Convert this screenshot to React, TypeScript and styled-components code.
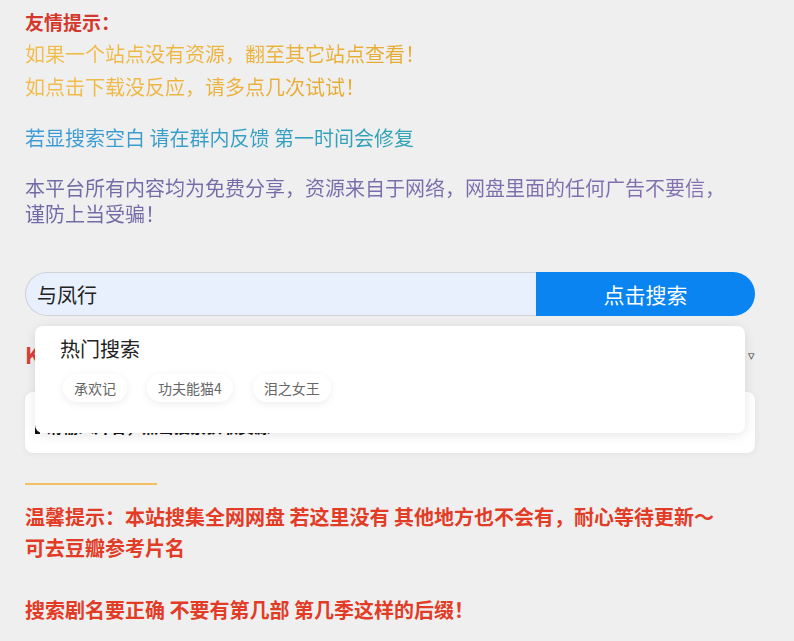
import styled, { createGlobalStyle } from "styled-components";

const GlobalStyle = createGlobalStyle`
  body {
    margin: 0;
    background: #efefef;
    font-family: "Noto Sans CJK SC", "Noto Sans", sans-serif;
  }
`;

const Page = styled.div`
  width: 730px;
  padding: 7px 39px 20px 25px;
`;

const Title = styled.div`
  font-size: 19px;
  font-weight: 700;
  line-height: 30px;
  color: #d4372c;
`;

const GradientText = styled.div<{ $from: string; $to: string; $lh: number }>`
  font-size: 20px;
  line-height: ${({ $lh }) => $lh}px;
  background: linear-gradient(90deg, ${({ $from }) => $from}, ${({ $to }) => $to});
  -webkit-background-clip: text;
  background-clip: text;
  color: transparent;
  width: fit-content;
  max-width: 715px;
`;

const Spaced = styled.div<{ $top: number }>`
  margin-top: ${({ $top }) => $top}px;
`;

const SearchWrap = styled.div`
  position: relative;
  margin-top: 45px;
`;

const SearchBar = styled.form`
  display: flex;
  height: 44px;
`;

const SearchInput = styled.input`
  flex: 1;
  min-width: 0;
  box-sizing: border-box;
  height: 44px;
  padding: 0 11px;
  border: 1px solid #cfd3d8;
  border-right: none;
  border-radius: 22px 0 0 22px;
  background: #e8f0fe;
  font-family: inherit;
  font-size: 20px;
  color: #222;
  caret-color: #222;
  outline: none;
`;

const SearchButton = styled.button`
  width: 219px;
  height: 44px;
  border: none;
  border-radius: 0 22px 22px 0;
  background: #0a84f0;
  color: #fff;
  font-family: inherit;
  font-size: 21px;
  cursor: pointer;
`;

const Dropdown = styled.div`
  position: absolute;
  top: 54px;
  left: 10px;
  right: 10px;
  height: 107px;
  box-sizing: border-box;
  padding: 9px 25px 0;
  background: #fff;
  border-radius: 8px;
  box-shadow: 0 2px 12px rgba(0, 0, 0, 0.1);
  z-index: 2;
`;

const DropTitle = styled.div`
  font-size: 20px;
  line-height: 28px;
  color: #222;
`;

const Chips = styled.div`
  display: flex;
  gap: 20px;
  margin: 11px 0 0 3px;
`;

const Chip = styled.span`
  height: 28px;
  line-height: 28px;
  padding: 0 11px;
  border-radius: 14px;
  background: #fff;
  box-shadow: 0 2px 8px rgba(0, 0, 0, 0.07);
  font-size: 14px;
  color: #666;
`;

const HeadRow = styled.div`
  display: flex;
  justify-content: space-between;
  align-items: center;
  height: 30px;
  margin-top: 23px;
`;

const Brand = styled.div`
  font-size: 22px;
  font-weight: 700;
  color: #d8403a;
`;

const Select = styled.div`
  font-size: 13px;
  color: #333;
`;

const Card = styled.div`
  margin-top: 23px;
  height: 61px;
  box-sizing: border-box;
  padding: 23px 10px 0;
  background: #fff;
  border-radius: 8px;
  box-shadow: 0 1px 6px rgba(0, 0, 0, 0.06);
`;

const CardText = styled.div`
  display: flex;
  align-items: center;
  gap: 6px;
  font-size: 16px;
  font-weight: 700;
  line-height: 22px;
  color: #111;
`;

const Mark = styled.span`
  width: 5px;
  height: 16px;
  background: #111;
`;

const Divider = styled.hr`
  width: 132px;
  margin: 30px 0 0;
  border: none;
  border-top: 2px solid #f2c063;
`;

const Warn = styled.div`
  margin-top: 16px;
  font-size: 20px;
  font-weight: 700;
  line-height: 31px;
  color: #e23c27;
`;

export default function App() {
  const hot = ["承欢记", "功夫能猫4", "泪之女王"];
  return (
    <>
      <GlobalStyle />
      <Page>
        <Title>友情提示：</Title>
        <GradientText $from="#f2bd4c" $to="#e6aa30" $lh={33}>
          如果一个站点没有资源，翻至其它站点查看！
        </GradientText>
        <GradientText $from="#f2bd4c" $to="#e6aa30" $lh={33}>
          如点击下载没反应，请多点几次试试！
        </GradientText>
        <Spaced $top={20}>
          <GradientText $from="#3c9ad8" $to="#2fa3b4" $lh={30}>
            若显搜索空白 请在群内反馈 第一时间会修复
          </GradientText>
        </Spaced>
        <Spaced $top={22}>
          <GradientText $from="#6f6aa6" $to="#8470b0" $lh={26}>
            本平台所有内容均为免费分享，资源来自于网络，网盘里面的任何广告不要信，谨防上当受骗！
          </GradientText>
        </Spaced>

        <SearchWrap>
          <SearchBar onSubmit={(e) => e.preventDefault()}>
            <SearchInput defaultValue="与凤行" autoFocus />
            <SearchButton type="submit">点击搜索</SearchButton>
          </SearchBar>
          <Dropdown>
            <DropTitle>热门搜索</DropTitle>
            <Chips>
              {hot.map((h) => (
                <Chip key={h}>{h}</Chip>
              ))}
            </Chips>
          </Dropdown>
        </SearchWrap>

        <HeadRow>
          <Brand>KK网盘搜索</Brand>
          <Select>全部 ▿</Select>
        </HeadRow>
        <Card>
          <CardText>
            <Mark />
            请输入片名，点击搜索获取资源
          </CardText>
        </Card>

        <Divider />
        <Warn>
          温馨提示：本站搜集全网网盘 若这里没有 其他地方也不会有，耐心等待更新～
          <br />
          可去豆瓣参考片名
          <br />
          <br />
          搜索剧名要正确 不要有第几部 第几季这样的后缀！
        </Warn>
      </Page>
    </>
  );
}
